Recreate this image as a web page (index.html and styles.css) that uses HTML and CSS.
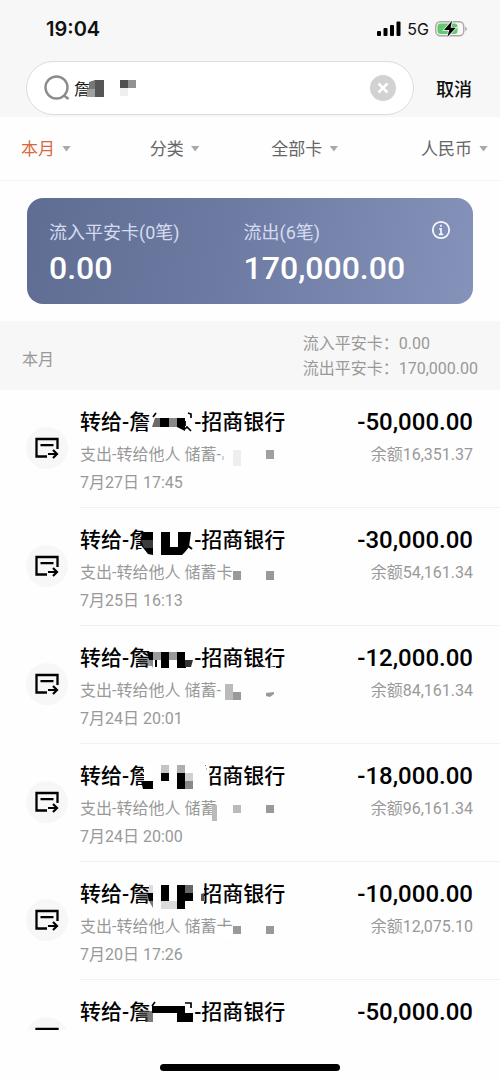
FILE: index.html
```html
<!DOCTYPE html>
<html lang="zh-CN">
<head>
<meta charset="utf-8">
<meta name="viewport" content="width=device-width, initial-scale=1">
<title>收支明细</title>
<link rel="stylesheet" href="styles.css">
</head>
<body>
<svg class="defs" aria-hidden="true">
  <symbol id="transfer" viewBox="0 0 24 24">
    <path d="M12 20.500H1.500V3h21v10" fill="none" stroke="#000" stroke-width="2.300"/>
    <path d="M5.500 9.200h13M13 18h9M18 14l4 4-4 4" fill="none" stroke="#000" stroke-width="2.200"/>
  </symbol>
</svg>
<div class="app">
  <header class="top">
    <div class="status">
      <span class="time">19:04</span>
      <div class="signals">
        <svg class="bars" viewBox="0 0 24 16" aria-hidden="true"><rect x="0" y="10" width="4" height="5" rx="1"/><rect x="6.500" y="7" width="4" height="8" rx="1"/><rect x="13" y="4" width="4" height="11" rx="1"/><rect x="19.500" y="0.500" width="4" height="14.500" rx="1"/></svg>
        <span class="net">5G</span>
        <svg class="battery" viewBox="0 0 33 18" aria-hidden="true">
          <rect x="0.750" y="1.750" width="28" height="14" rx="4.500" fill="none" stroke="#a9a9a9" stroke-width="1.400"/>
          <rect x="2.500" y="3.500" width="20" height="10.500" rx="3" fill="#63c96f"/>
          <path d="M30.300 6.500c2 .8 2 4 0 4.800z" fill="#a9a9a9"/>
          <path d="M17 .8 9 10h5.200L12.300 17 20.800 7.800h-5.200z" fill="#000" stroke="#f7f7f7" stroke-width="1.600" paint-order="stroke"/>
        </svg>
      </div>
    </div>
    <form class="search">
      <div class="field">
        <svg class="lens" viewBox="0 0 26 26" aria-hidden="true"><circle cx="12.500" cy="12.500" r="11" fill="none" stroke="#8c8c8c" stroke-width="2.400"/><path d="M20 20.500l4.500 3.500" stroke="#8c8c8c" stroke-width="2.600"/></svg>
        <div class="entry">
          <input class="query" type="text" value="詹" aria-label="搜索">
          <svg class="query-mask" viewBox="0 0 64 18" aria-hidden="true"><path d="M15 2l6-2v17h-6z" fill="#777"/><path d="M13 9h8v8h-8z" fill="#a0a0a0"/><path d="M21 0h9v17h-9z" fill="#565656"/><path d="M46 0h8v8h-8z" fill="#505050"/><path d="M54 0h8v8h-8z" fill="#929292"/><path d="M46 8h8v8h-8z" fill="#efefef"/></svg>
        </div>
        <button class="clear" type="button" aria-label="清除"><svg viewBox="0 0 26 26"><circle cx="13" cy="13" r="13" fill="#d2d2d2"/><path d="M8.500 8.500l9 9M17.500 8.500l-9 9" stroke="#fff" stroke-width="2.600"/></svg></button>
      </div>
      <button class="cancel" type="button">取消</button>
    </form>
  </header>

  <nav class="filters" aria-label="筛选">
    <label class="filter active"><select aria-label="时间"><option>本月</option></select></label>
    <label class="filter"><select aria-label="分类"><option>分类</option></select></label>
    <label class="filter"><select aria-label="卡片"><option>全部卡</option></select></label>
    <label class="filter"><select aria-label="币种"><option>人民币</option></select></label>
  </nav>

  <section class="card">
    <div class="stat"><span class="stat-label">流入平安卡(0笔)</span><span class="stat-value">0.00</span></div>
    <div class="stat"><span class="stat-label">流出(6笔)</span><span class="stat-value">170,000.00</span></div>
    <button class="info" type="button" aria-label="说明"><svg viewBox="0 0 20 20"><circle cx="10" cy="10" r="8.200" fill="none" stroke="#f4f6fc" stroke-width="1.800"/><path d="M10 4.800v2M8.300 8.800H10v5.400M7.800 14.400h4.400" fill="none" stroke="#f4f6fc" stroke-width="1.700"/></svg></button>
  </section>

  <section class="month">
    <h2 class="month-name">本月</h2>
    <div class="totals"><span>流入平安卡：</span><span>0.00</span><span>流出平安卡：</span><span>170,000.00</span></div>
  </section>

  <ul class="list">
    <li class="row">
      <span class="badge"><svg aria-hidden="true"><use href="#transfer"/></svg></span>
      <div class="body">
        <div class="detail">
          <div class="title">转给-詹<span class="gap"></span>-招商银行</div>
          <div class="sub">支出-转给他人 储蓄-</div>
          <div class="sub">7月27日 17:45</div>
          <svg class="mask" viewBox="0 0 205 62" aria-hidden="true"><path d="M75 11h5v9h-8z" fill="#6a6a6a"/><path d="M80 11h9v9h-9z"/><path d="M89 11h8v9h-8z" fill="#888"/><path d="M97 11h8v13l-8-4z"/><path d="M73 10l3-4M108 6l3 1v4M105 14v5M105 22l2-2 4 4" fill="none" stroke="#000" stroke-width="1.700"/><path d="M153 43h8v16h-8z" fill="#eee"/><path d="M186 43h8v9h-8z" fill="#a0a0a0"/><path d="M143 49v4" stroke="#aaa"/></svg>
        </div>
        <div class="amounts"><strong>-50,000.00</strong><span>余额16,351.37</span></div>
      </div>
    </li>
    <li class="row">
      <span class="badge"><svg aria-hidden="true"><use href="#transfer"/></svg></span>
      <div class="body">
        <div class="detail">
          <div class="title">转给-詹<span class="gap"></span>-招商银行</div>
          <div class="sub">支出-转给他人 储蓄卡</div>
          <div class="sub">7月25日 16:13</div>
          <svg class="mask" viewBox="0 0 205 62" aria-hidden="true"><path d="M61 23l2-16h10v23l-8-3z" fill="#fff"/><path d="M62 7h11v23l-5-1-8-10z"/><path d="M61 15h12v8h-9z" fill="#3c3c3c"/><path d="M81 7h9v15h8V7h13l-2 15-4 5-3 3H81z"/><path d="M107 20l5 4" stroke="#000" stroke-width="2"/><path d="M153 46h8v9h-8zM186 46h8v9h-8z" fill="#999"/></svg>
        </div>
        <div class="amounts"><strong>-30,000.00</strong><span>余额54,161.34</span></div>
      </div>
    </li>
    <li class="row">
      <span class="badge"><svg aria-hidden="true"><use href="#transfer"/></svg></span>
      <div class="body">
        <div class="detail">
          <div class="title">转给-詹<span class="gap"></span>-招商银行</div>
          <div class="sub">支出-转给他人 储蓄-</div>
          <div class="sub">7月24日 20:01</div>
          <svg class="mask" viewBox="0 0 205 62" aria-hidden="true"><path d="M58 15h14v8H60z" fill="#333" opacity=".5"/><path d="M67 9h6v8h-4z"/><path d="M73 9h32v8H73z" fill="#9b9b9b"/><path d="M69 17h4v8z" fill="#888"/><path d="M75 17h2v7h-2zM81 9h8v16h-8zM97 9h8v8h1v8h-9z"/><path d="M105 17h8l-2 7h-6z" fill="#333"/><path d="M177 24l4-3 5 3zM189 24l6-1v1z" fill="#222"/><path d="M145 41h8v16h-8z" fill="#bbb"/><path d="M153 49h8v8h-8zM186 50l8-1v2l-4 3-4-1z" fill="#999"/></svg>
        </div>
        <div class="amounts"><strong>-12,000.00</strong><span>余额84,161.34</span></div>
      </div>
    </li>
    <li class="row">
      <span class="badge"><svg aria-hidden="true"><use href="#transfer"/></svg></span>
      <div class="body">
        <div class="detail">
          <div class="title">转给-詹<span class="gap wide"></span>招商银行</div>
          <div class="sub">支出-转给他人 储蓄</div>
          <div class="sub">7月24日 20:00</div>
          <svg class="mask" viewBox="0 0 205 62" aria-hidden="true"><path d="M64 4h9v22h-9zM120 2h9v26h-9z" fill="#fff"/><path d="M61 20h12v8H63zM81 12h8v8h-8zM97 12h8v16h-8z"/><path d="M81 4h8v8h-8z" fill="#c4c4c4"/><path d="M97 4h8v8h-8z" fill="#afafaf"/><path d="M105 12h8v8h-8z" fill="#d0d0d0"/><path d="M105 20h8v8h-8z" fill="#888"/><path d="M125 4l1 1M126 8h1" stroke="#777"/><path d="M132 44h5v16h-5zM153 44h8v8h-8z" fill="#bbb"/><path d="M186 44h8v8h-8z" fill="#999"/></svg>
        </div>
        <div class="amounts"><strong>-18,000.00</strong><span>余额96,161.34</span></div>
      </div>
    </li>
    <li class="row">
      <span class="badge"><svg aria-hidden="true"><use href="#transfer"/></svg></span>
      <div class="body">
        <div class="detail">
          <div class="title">转给-詹<span class="gap wide"></span>招商银行</div>
          <div class="sub">支出-转给他人 储蓄卡</div>
          <div class="sub">7月20日 17:26</div>
          <svg class="mask" viewBox="0 0 205 62" aria-hidden="true"><path d="M119 4h5v24h-5zM137 48h15v12h-15z" fill="#fff"/><path d="M69 6h4v8h-4zM81 22h16v8H81z" fill="#dcdcdc"/><path d="M58 14h12v8H60z" fill="#333" opacity=".5"/><path d="M67 14h6v8h-4zM81 6h8v16h-8zM97 6h8v24h-8zM105 14h8v8h-8z"/><path d="M69 22h4v7z" fill="#777"/><path d="M105 6h8v8h-8z" fill="#666"/><path d="M121 15l3-1v8h-3z" fill="#555"/><path d="M153 47h8v8h-8zM186 47h8v8h-8z" fill="#999"/></svg>
        </div>
        <div class="amounts"><strong>-10,000.00</strong><span>余额12,075.10</span></div>
      </div>
    </li>
    <li class="row">
      <span class="badge"><svg aria-hidden="true"><use href="#transfer"/></svg></span>
      <div class="body">
        <div class="detail">
          <div class="title">转给-詹<span class="gap"></span>-招商银行</div>
          <svg class="mask" viewBox="0 0 205 62" aria-hidden="true"><path d="M59 14h14v11h-8v-4h-5z" fill="#444" opacity=".7"/><path d="M72 9h33v7h8v9H97v-9H72z"/><path d="M72 9l3-4M105 6h6v5" fill="none" stroke="#000" stroke-width="1.700"/></svg>
        </div>
        <div class="amounts"><strong>-50,000.00</strong></div>
      </div>
    </li>
  </ul>

  <footer class="home"><span class="home-bar"></span></footer>
</div>
</body>
</html>
```
FILE: styles.css
```css
* { box-sizing: border-box; }

body {
  margin: 0;
  background: #fefefe;
  color: #111;
  font-family: Roboto, "Noto Sans CJK SC", sans-serif;
  font-size: 16px;
}

button, input, select {
  margin: 0;
  padding: 0;
  border: 0;
  background: none;
  color: inherit;
  font: inherit;
  appearance: none;
}

svg { display: block; }
.defs { display: none; }

.app {
  display: flex;
  flex-direction: column;
  height: 100vh;
  overflow: hidden;
}

.top {
  flex: none;
  padding-bottom: 2px;
  background: #f7f7f7;
}

.status {
  display: flex;
  align-items: center;
  justify-content: space-between;
  height: 61px;
  padding: 0 32px 4px 46px;
}

.time {
  font-family: Inter, sans-serif;
  font-size: 20px;
  font-weight: 600;
}

.signals {
  display: flex;
  align-items: center;
  gap: 6px;
}

.bars { width: 24px; height: 16px; }
.battery { width: 33px; height: 18px; }

.net {
  font-family: Inter, sans-serif;
  font-size: 16px;
}

.search {
  display: flex;
  align-items: center;
  gap: 22px;
  padding: 0 28px 0 26px;
}

.field {
  display: flex;
  flex: 1;
  align-items: center;
  gap: 4px;
  height: 54px;
  padding: 0 17px;
  border: 1px solid #dcdcdc;
  border-radius: 27px;
  background: #fff;
}

.lens { width: 26px; height: 26px; flex: none; }

.entry {
  position: relative;
  flex: 1;
}

.query {
  width: 100%;
  height: 24px;
  outline: none;
}

.query-mask {
  position: absolute;
  top: 4px;
  left: 0;
  width: 64px;
  height: 18px;
}

.clear { width: 26px; height: 26px; }

.cancel {
  font-size: 18px;
  font-weight: 500;
}

.filters {
  display: grid;
  flex: none;
  grid-template-columns: 129fr 122fr 150fr auto;
  align-items: center;
  height: 64px;
  padding: 0 12px 0 21px;
  border-bottom: 1px solid #f3f3f3;
  color: #666;
  font-size: 17px;
}

.filter {
  display: flex;
  align-items: center;
  gap: 7px;
}

.filter::after {
  width: 9px;
  height: 6px;
  background: #a9a9a9;
  clip-path: polygon(0 0, 100% 0, 50% 100%);
  content: "";
}

.active { color: #d9683c; }

.card {
  display: grid;
  flex: none;
  grid-template-columns: 191fr 184fr auto;
  align-items: start;
  height: 106px;
  margin: 17px 27px;
  padding: 20px 22px;
  border-radius: 16px;
  background: linear-gradient(100deg, #5f6d92, #6d7ba3 45%, #8592b9);
}

.stat {
  display: flex;
  flex-direction: column;
}

.stat-label {
  color: #d5dcf0;
  font-size: 18px;
  line-height: 30px;
}

.stat-value {
  color: #fff;
  font-size: 32px;
  font-weight: 500;
  line-height: 40px;
}

.info { width: 20px; height: 20px; margin-top: 2px; }

.month {
  display: flex;
  flex: none;
  align-items: center;
  justify-content: space-between;
  height: 69px;
  padding: 0 22px;
  background: #f7f7f7;
  color: #999;
}

.month-name {
  margin: 4px 0 0;
  font-size: 16px;
  font-weight: 400;
}

.totals {
  display: grid;
  grid-template-columns: auto auto;
  line-height: 25px;
}

.list {
  flex: 1;
  min-height: 0;
  margin: 0;
  padding: 0;
  overflow: hidden;
  list-style: none;
}

.row {
  display: flex;
  gap: 12px;
  height: 118px;
  padding-left: 26px;
}

.badge {
  display: grid;
  flex: none;
  width: 42px;
  height: 42px;
  margin-top: 37px;
  border-radius: 50%;
  background: #f7f7f7;
  place-items: center;
}

.badge svg { width: 24px; height: 24px; }

.body {
  display: flex;
  flex: 1;
  justify-content: space-between;
  padding: 17px 27px 10px 0;
  border-bottom: 1px solid #f1f1f1;
}

.detail {
  position: relative;
  white-space: nowrap;
}

.title {
  margin-bottom: 4px;
  color: #000;
  font-size: 21px;
  font-weight: 500;
  line-height: 30px;
}

.gap {
  display: inline-block;
  width: 44px;
}

.wide { width: 51px; }

.sub {
  color: #999;
  line-height: 28px;
}

.mask {
  position: absolute;
  top: 0;
  left: 0;
  width: 205px;
  height: 62px;
}

.amounts {
  display: flex;
  flex-direction: column;
  align-items: flex-end;
  gap: 4px;
  color: #999;
  line-height: 28px;
}

.amounts strong {
  color: #000;
  font-size: 24px;
  font-weight: 500;
  line-height: 30px;
}

.home {
  display: flex;
  flex: none;
  align-items: flex-end;
  justify-content: center;
  height: 52px;
  padding-bottom: 11px;
}

.home-bar {
  width: 36%;
  height: 7px;
  border-radius: 4px;
  background: #000;
}
```
